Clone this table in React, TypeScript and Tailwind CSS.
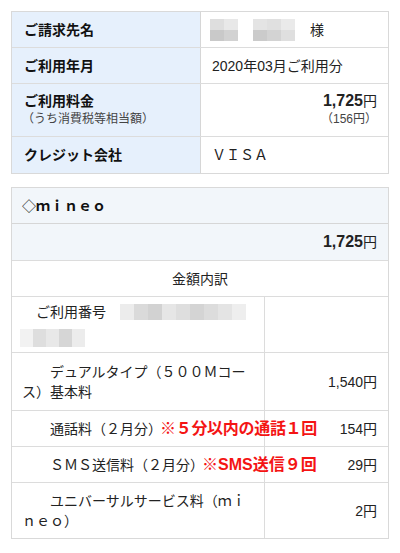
import React from "react";

const font = { fontFamily: '"Liberation Sans", "Noto Sans CJK JP", sans-serif' };

function Mosaic({ cols, rows, w, h }: { cols: string[][]; rows: number; w: number; h: number }) {
  return (
    <span className="inline-flex flex-col align-middle">
      {Array.from({ length: rows }).map((_, r) => (
        <span key={r} className="flex">
          {cols.map((c, i) => (
            <span key={i} className="block" style={{ width: w, height: h, background: c[r] }} />
          ))}
        </span>
      ))}
    </span>
  );
}

export default function App() {
  return (
    <div className="w-[400px] h-[553px] bg-white pt-[11px] text-[#222]" style={font}>
      {/* Table 1 */}
      <div className="ml-[11px] w-[378px] border border-[#d9d9d9] text-[14px] leading-[20px]">
        <div className="flex h-[36px] border-b border-[#dcdcdc]">
          <div className="w-[189px] shrink-0 bg-[#e6f0fc] border-r border-[#d6d6d6] pl-[12px] flex items-center font-bold text-[#111]">
            ご請求先名
          </div>
          <div className="flex-1 pl-[9px] flex items-center">
            <Mosaic
              rows={2}
              w={14}
              h={11}
              cols={[
                ["#dedede", "#c9c9c9"],
                ["#e8e8e8", "#d2d2d2"],
              ]}
            />
            <span className="w-[15px]" />
            <Mosaic
              rows={2}
              w={14}
              h={11}
              cols={[
                ["#e4e4e4", "#cbcbcb"],
                ["#e0e0e0", "#d3d3d3"],
                ["#eaeaea", "#dfdfdf"],
              ]}
            />
            <span className="ml-[15px]">様</span>
          </div>
        </div>
        <div className="flex h-[36px] border-b border-[#dcdcdc]">
          <div className="w-[189px] shrink-0 bg-[#e6f0fc] border-r border-[#d6d6d6] pl-[12px] flex items-center font-bold text-[#111]">
            ご利用年月
          </div>
          <div className="flex-1 pl-[11px] flex items-center">2020年03月ご利用分</div>
        </div>
        <div className="flex h-[53px] border-b border-[#dcdcdc]">
          <div className="w-[189px] shrink-0 bg-[#e6f0fc] border-r border-[#d6d6d6] pl-[12px] flex flex-col justify-center">
            <div className="font-bold text-[#111] leading-[18px]">ご利用料金</div>
            <div className="text-[12px] leading-[18px] text-[#444] -ml-[2px]">（うち消費税等相当額）</div>
          </div>
          <div className="flex-1 pr-[11px] flex flex-col justify-center items-end">
            <div className="leading-[18px]">
              <span className="font-bold text-[16px]">1,725</span>
              <span>円</span>
            </div>
            <div className="text-[12px] leading-[18px] text-[#444]">（156円）</div>
          </div>
        </div>
        <div className="flex h-[36px]">
          <div className="w-[189px] shrink-0 bg-[#e6f0fc] border-r border-[#d6d6d6] pl-[12px] flex items-center font-bold text-[#111]">
            クレジット会社
          </div>
          <div className="flex-1 pl-[11px] flex items-center">ＶＩＳＡ</div>
        </div>
      </div>

      {/* Table 2 */}
      <div className="ml-[11px] mt-[13px] w-[378px] border border-[#d9d9d9] text-[14px] leading-[20px]">
        <div className="h-[36px] bg-[#f2f6fa] border-b border-[#d6d6d6] pl-[10px] flex items-center">
          <span>◇</span>
          <span className="font-bold text-[#111]">ｍｉｎｅｏ</span>
        </div>
        <div className="h-[37px] bg-[#f2f6fa] border-b border-[#dcdcdc] pr-[11px] flex items-center justify-end">
          <span className="font-bold text-[16px]">1,725</span>
          <span>円</span>
        </div>
        <div className="h-[36px] border-b border-[#dcdcdc] flex items-center justify-center">金額内訳</div>

        <div className="flex h-[56px] border-b border-[#dcdcdc]">
          <div className="w-[253px] shrink-0 border-r border-[#dcdcdc] pl-[8px] flex flex-col justify-center">
            <div className="flex items-center pl-[2px]">
              <span>　ご利用番号　</span>
              <Mosaic
                rows={1}
                w={14}
                h={16}
                cols={[["#ececec"], ["#dadada"], ["#d2d2d2"], ["#e6e6e6"], ["#dedede"], ["#d4d4d4"], ["#dcdcdc"], ["#e4e4e4"], ["#eeeeee"]]}
              />
            </div>
            <div className="mt-[5px]">
              <Mosaic
                rows={1}
                w={13}
                h={18}
                cols={[["#f2f2f2"], ["#dedede"], ["#e8e8e8"], ["#d6d6d6"], ["#ececec"]]}
              />
            </div>
          </div>
          <div className="flex-1" />
        </div>

        <div className="flex h-[58px] border-b border-[#dcdcdc]">
          <div className="w-[253px] shrink-0 border-r border-[#dcdcdc] pl-[10px] pr-[12px] flex items-center">
            <div>　　デュアルタイプ（５００Ｍコース）基本料</div>
          </div>
          <div className="flex-1 pr-[11px] flex items-center justify-end">1,540円</div>
        </div>

        <div className="flex h-[36px] border-b border-[#dcdcdc]">
          <div className="w-[253px] shrink-0 border-r border-[#dcdcdc] pl-[10px] flex items-center whitespace-nowrap">
            <span>　　通話料（２月分）</span>
            <span className="font-bold text-[16px] text-[#f41414] -ml-[2px] tracking-[-0.3px]">※５分以内の通話１回</span>
          </div>
          <div className="flex-1 pr-[11px] flex items-center justify-end">154円</div>
        </div>

        <div className="flex h-[36px] border-b border-[#dcdcdc]">
          <div className="w-[253px] shrink-0 border-r border-[#dcdcdc] pl-[10px] flex items-center whitespace-nowrap">
            <span>　　ＳＭＳ送信料（２月分）</span>
            <span className="font-bold text-[16px] text-[#f41414] -ml-[2px]">※SMS送信９回</span>
          </div>
          <div className="flex-1 pr-[11px] flex items-center justify-end">29円</div>
        </div>

        <div className="flex h-[55px]">
          <div className="w-[253px] shrink-0 border-r border-[#dcdcdc] pl-[10px] pr-[12px] flex items-center">
            <div>　　ユニバーサルサービス料（ｍｉｎｅｏ）</div>
          </div>
          <div className="flex-1 pr-[11px] flex items-center justify-end">2円</div>
        </div>
      </div>
    </div>
  );
}
